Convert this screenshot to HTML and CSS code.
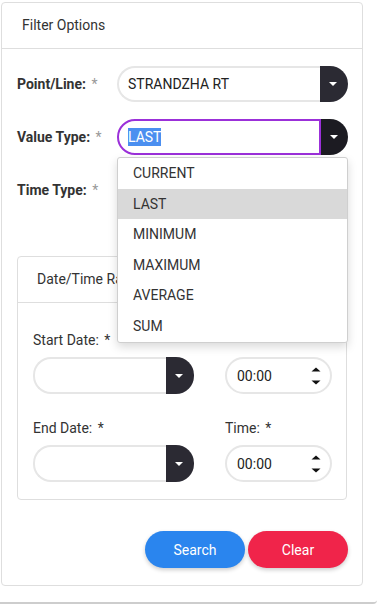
FILE: index.html
```html
<!DOCTYPE html>
<html lang="en">
<head>
    <meta charset="UTF-8">
    <meta name="viewport" content="width=device-width, initial-scale=1.0">
    <title>Filter Options</title>
<link rel="stylesheet" href="styles.css">
</head>
<body>
    <div class="page">
        <div class="card">
            <div class="card-header">Filter Options</div>

            <div class="card-body">
                <div class="form-row">
                    <label class="field-label">Point/Line: <span class="req">*</span></label>
                    <div class="select-box">
                        <div class="select-value">STRANDZHA RT</div>
                        <div class="select-btn"><span class="caret"></span></div>
                    </div>
                </div>

                <div class="form-row value-row">
                    <label class="field-label">Value Type: <span class="req">*</span></label>
                    <div class="select-box active">
                        <div class="select-value"><span class="selected-text">LAST</span></div>
                        <div class="select-btn"><span class="caret"></span></div>
                    </div>

                    <ul class="dropdown">
                        <li>CURRENT</li>
                        <li class="hover">LAST</li>
                        <li>MINIMUM</li>
                        <li>MAXIMUM</li>
                        <li>AVERAGE</li>
                        <li>SUM</li>
                    </ul>
                </div>

                <div class="form-row">
                    <label class="field-label">Time Type: <span class="req">*</span></label>
                    <div class="select-box">
                        <div class="select-value"></div>
                        <div class="select-btn"><span class="caret"></span></div>
                    </div>
                </div>

                <!-- Date/Time range -->
                <div class="inner-card">
                    <div class="inner-header">Date/Time Range</div>
                    <div class="inner-body">
                        <div class="date-row">
                            <div class="date-col">
                                <div class="small-label">Start Date: <span class="star">*</span></div>
                                <div class="select-box date-box">
                                    <div class="select-value"></div>
                                    <div class="select-btn"><span class="caret"></span></div>
                                </div>
                            </div>
                            <div class="time-col">
                                <div class="small-label hidden-label">Time: <span class="star">*</span></div>
                                <div class="time-box">
                                    <span>00:00</span>
                                    <svg class="spin" width="10" height="20" viewBox="0 0 10 20">
                                        <path d="M0.5 5.5 L5 1.5 L9.5 5.5 Z" fill="#111"/>
                                        <path d="M0.5 14.5 L5 18.5 L9.5 14.5 Z" fill="#111"/>
                                    </svg>
                                </div>
                            </div>
                        </div>

                        <div class="date-row">
                            <div class="date-col">
                                <div class="small-label">End Date: <span class="star">*</span></div>
                                <div class="select-box date-box">
                                    <div class="select-value"></div>
                                    <div class="select-btn"><span class="caret"></span></div>
                                </div>
                            </div>
                            <div class="time-col">
                                <div class="small-label">Time: <span class="star">*</span></div>
                                <div class="time-box">
                                    <span>00:00</span>
                                    <svg class="spin" width="10" height="20" viewBox="0 0 10 20">
                                        <path d="M0.5 5.5 L5 1.5 L9.5 5.5 Z" fill="#111"/>
                                        <path d="M0.5 14.5 L5 18.5 L9.5 14.5 Z" fill="#111"/>
                                    </svg>
                                </div>
                            </div>
                        </div>
                    </div>
                </div>

                <div class="actions">
                    <button class="btn btn-search">Search</button>
                    <button class="btn btn-clear">Clear</button>
                </div>
            </div>
        </div>
    </div>
</body>
</html>
```

FILE: styles.css
```css
:root {
    --border: #dedede;
    --text-color: #333;
    --dark-btn: #2b2a33;
    --purple: #9b30d9;
    --blue: #2a85ee;
    --red: #f0244a;
}

* {
    box-sizing: border-box;
}

body {
    margin: 0;
    font-family: Roboto, "Noto Sans", Arial, sans-serif;
    color: var(--text-color);
    background: #fff;
}

.page {
    width: 377px;
    height: 604px;
    padding: 2px 0 0 1px;
    border-bottom: 2px solid #cdcdcd;
    border-bottom-right-radius: 4px;
}

/* Outer card */
.card {
    width: 362px;
    border: 1px solid var(--border);
    border-radius: 4px;
}

.card-header {
    height: 46px;
    line-height: 44px;
    padding: 0 20px;
    font-size: 14px;
    border-bottom: 1px solid var(--border);
}

.card-body {
    padding: 17px 14px 17px 15px;
}

/* Form rows */
.form-row {
    display: flex;
    align-items: center;
    margin-bottom: 17px;
    position: relative;
}

.field-label {
    width: 100px;
    flex-shrink: 0;
    font-size: 14px;
    font-weight: bold;
}

.req {
    color: #999;
    font-weight: normal;
    margin-left: 2px;
}

/* Pill select with dark button */
.select-box {
    flex: 1;
    display: flex;
    height: 36px;
}

.select-value {
    flex: 1;
    border: 2px solid #e6e6e6;
    border-right: none;
    border-radius: 18px 0 0 18px;
    padding: 0 9px;
    font-size: 14px;
    line-height: 32px;
    color: #222;
    white-space: nowrap;
}

.select-btn {
    width: 28px;
    background: var(--dark-btn);
    border-radius: 0 18px 18px 0;
    display: flex;
    align-items: center;
    justify-content: center;
    padding-right: 2px;
}

.caret {
    width: 0;
    height: 0;
    border-left: 4px solid transparent;
    border-right: 4px solid transparent;
    border-top: 4px solid #fff;
}

.select-box.active .select-value {
    border: 2px solid var(--purple);
    border-radius: 18px 0 0 18px;
}

.select-box.active .select-btn {
    background: #1c1b22;
    width: 27px;
}

.selected-text {
    background: #4b8ff0;
    color: #fff;
    padding: 1px 0;
}

/* Open dropdown list */
.dropdown {
    position: absolute;
    top: 38px;
    left: 100px;
    right: 0;
    margin: 0;
    padding: 0;
    list-style: none;
    background: #fff;
    border: 1px solid #cfcfcf;
    border-radius: 3px;
    box-shadow: 0 4px 10px rgba(0, 0, 0, 0.15);
    z-index: 10;
}

.dropdown li {
    height: 30.6px;
    line-height: 30.6px;
    padding-left: 15px;
    font-size: 14px;
    color: #333;
}

.dropdown li.hover {
    background: #d9d9d9;
}

/* Inner card */
.inner-card {
    margin-top: 48px;
    width: 330px;
    border: 1px solid var(--border);
    border-radius: 4px;
}

.inner-header {
    height: 46px;
    line-height: 44px;
    padding: 0 19px;
    font-size: 14px;
    border-bottom: 1px solid var(--border);
}

.inner-body {
    padding: 27px 14px 17px 15px;
}

.date-row {
    display: flex;
    gap: 31px;
}

.date-row + .date-row {
    margin-top: 24px;
}

.date-col {
    width: 161px;
}

.time-col {
    width: 107px;
}

.small-label {
    font-size: 14px;
    line-height: 20px;
    margin-bottom: 7px;
}

.small-label .star {
    margin-left: 2px;
}

.hidden-label {
    visibility: hidden;
}

.date-box {
    height: 37px;
}

.time-box {
    height: 37px;
    border: 2px solid #e6e6e6;
    border-radius: 19px;
    display: flex;
    align-items: center;
    justify-content: space-between;
    padding: 0 9px 0 10px;
    font-size: 14px;
    color: #222;
}

/* Buttons */
.actions {
    display: flex;
    justify-content: flex-end;
    gap: 3px;
    margin-top: 31px;
}

.btn {
    width: 100px;
    height: 37px;
    border: none;
    border-radius: 19px;
    color: #fff;
    font-family: Roboto, "Noto Sans", Arial, sans-serif;
    font-size: 14px;
    cursor: pointer;
    box-shadow: 0 2px 4px rgba(0, 0, 0, 0.2);
}

.btn-search {
    background: var(--blue);
}

.btn-clear {
    background: var(--red);
}
```
